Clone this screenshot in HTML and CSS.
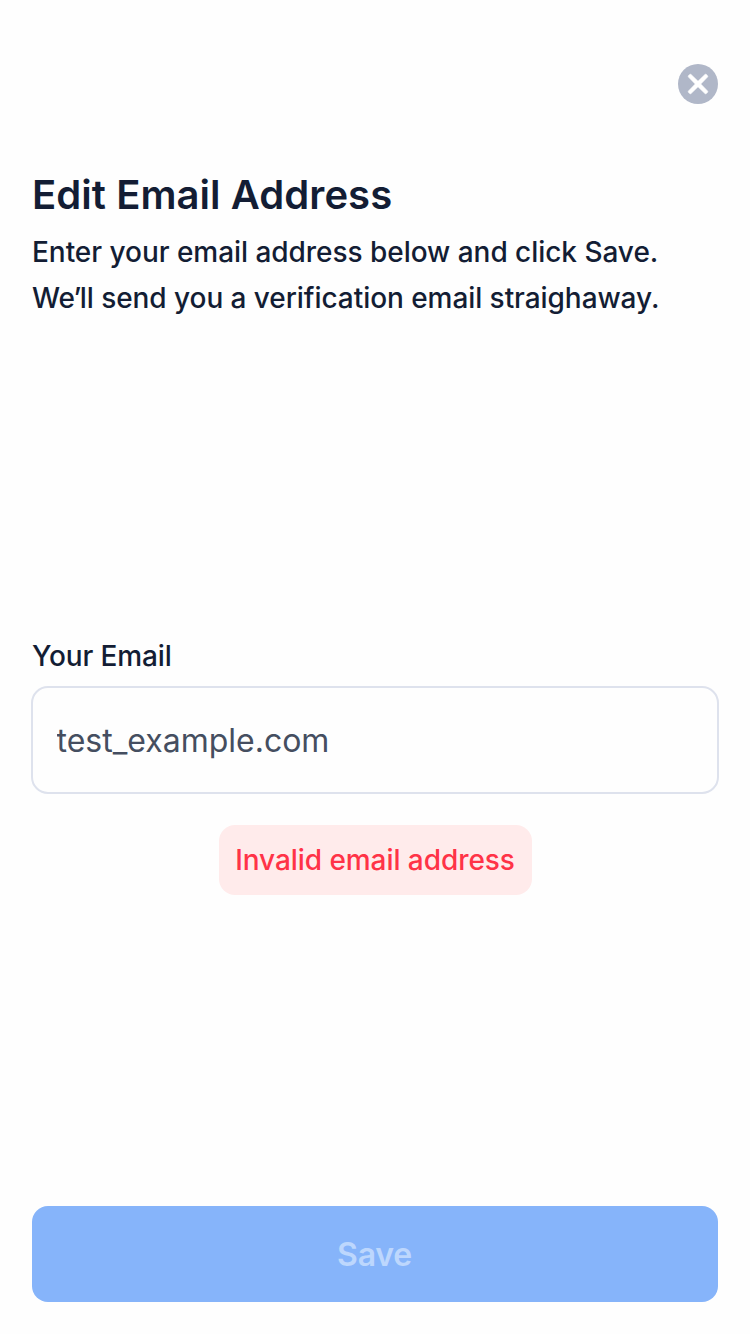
FILE: index.html
```html
<!DOCTYPE html>
<html lang="en">
<head>
<meta charset="utf-8">
<title>Edit Email Address</title>
<link rel="stylesheet" href="styles.css">
</head>
<body>
<main class="screen">
  <header class="topbar">
    <button class="close" aria-label="Close">
      <svg width="40" height="40" viewBox="0 0 40 40"><circle cx="20" cy="20" r="20" fill="#b0b7c8"/><path d="M13 10.5 20 17.3 27 10.5Q27.7 10 28.3 10.5L29.5 11.7Q30 12.3 29.5 13L22.7 20 29.5 27Q30 27.7 29.5 28.3L28.3 29.5Q27.7 30 27 29.5L20 22.7 13 29.5Q12.3 30 11.7 29.5L10.5 28.3Q10 27.7 10.5 27L17.3 20 10.5 13Q10 12.3 10.5 11.7L11.7 10.5Q12.3 10 13 10.5Z" fill="#fff" stroke="#fff" stroke-width=".7"/></svg>
    </button>
  </header>
  <section class="intro">
    <h1 class="title">Edit Email Address</h1>
    <p class="text"><span class="lead">Enter your email address below and click Save.</span><br><span class="follow">We<span class="apostrophe">’</span>ll send you a verification email straighaway.</span></p>
  </section>
  <form class="form">
    <label class="label" for="email">Your Email</label>
    <input class="input" id="email" type="text" value="test_example.com">
    <p class="error">Invalid email address</p>
  </form>
  <button class="save" disabled>Save</button>
</main>
</body>
</html>
```
FILE: styles.css
```css
* { box-sizing: border-box; margin: 0; }
body { background: #fefefe; font-family: Inter, "Liberation Sans", sans-serif; color: #131d34; }
.screen { display: flex; flex-direction: column; height: 1334px; padding: 64px 32px 32px; }
.topbar { display: flex; justify-content: flex-end; height: 40px; }
.close { border: 0; padding: 0; background: none; width: 40px; height: 40px; }
.close svg { display: block; }
.intro { margin-top: 67px; }
.title { font-size: 40px; font-weight: 600; line-height: 48px; letter-spacing: 0.06px; }
.text { margin-top: 10px; font-size: 28px; font-weight: 500; line-height: 46px; white-space: nowrap; }
.lead { letter-spacing: -0.04px; }
.follow { letter-spacing: -0.06px; }
.apostrophe { margin-left: -1.5px; letter-spacing: -1.5px; }
.form { display: flex; flex-direction: column; margin-top: 312px; }
.label { font-size: 28px; font-weight: 500; line-height: 46px; letter-spacing: -0.12px; }
.input { height: 108px; margin: 7px -1px 0; padding: 1px 23px 0 23.5px; border: 2px solid #dee2ed; border-radius: 17px; background: #fefefe; color: #454e60; font: 400 32px/48px Inter, "Liberation Sans", sans-serif; outline: 0; }
.error { align-self: center; margin-top: 31px; width: 313px; height: 70px; padding: 1px 0 0; border-radius: 16px; background: #ffebeb; color: #ff3347; font-size: 28px; font-weight: 500; line-height: 69px; letter-spacing: -0.06px; text-align: center; }
.save { height: 96px; margin-top: auto; padding: 2px 1px 0 0; border: 0; border-radius: 16px; background: #86b4fa; color: #bdd7fd; font: 600 32px/48px Inter, "Liberation Sans", sans-serif; letter-spacing: -0.2px; }
```
